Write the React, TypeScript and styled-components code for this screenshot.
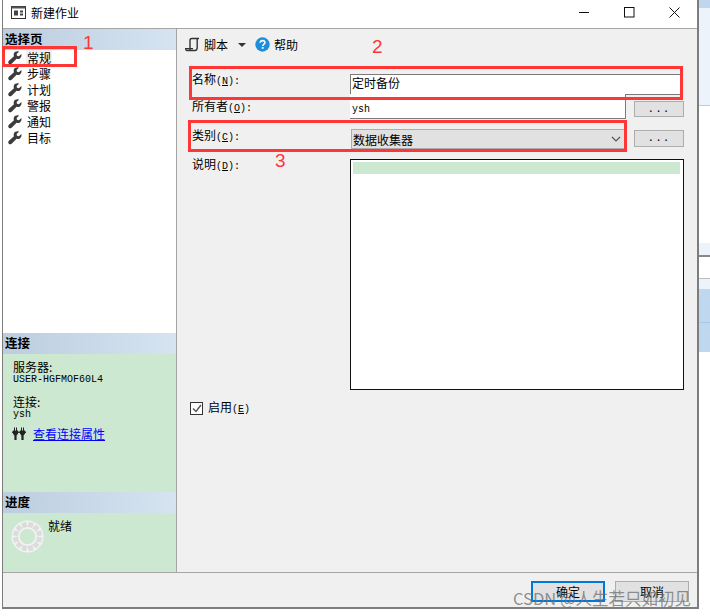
import styled, { createGlobalStyle } from "styled-components";

const Global = createGlobalStyle`
  html, body {
    margin: 0;
    padding: 0;
    background: #fff;
  }
  * {
    box-sizing: border-box;
  }
`;

const FONT = `"Noto Sans CJK SC", "Liberation Sans", sans-serif`;
const MONO = `"Liberation Mono", "Noto Sans CJK SC", monospace`;

const Page = styled.div`
  position: relative;
  width: 710px;
  height: 616px;
  overflow: hidden;
  display: flex;
  align-items: flex-start;
  padding-left: 2px;
  font-family: ${FONT};
  font-size: 12px;
  color: #000;
  background: #fff;
`;

const Dialog = styled.div`
  width: 697px;
  height: 609px;
  background: #f0f0f0;
  border-right: 2px solid #7d7d7d;
  border-bottom: 2px solid #7d7d7d;
  border-left: 1px solid #7d7d7d;
  display: flex;
  flex-direction: column;
`;

const TitleBar = styled.div`
  height: 29px;
  flex: none;
  background: #fff;
  border-bottom: 1px solid #a5a5a5;
  display: flex;
  align-items: center;
  padding: 0 17px 3px 8px;
  gap: 5px;
  font-size: 12px;
`;

const TitleText = styled.div`
  flex: 1;
`;

const WinButtons = styled.div`
  display: flex;
  align-items: center;
  gap: 34px;
`;

const Body = styled.div`
  flex: 1;
  display: flex;
  min-height: 0;
`;

const Side = styled.div`
  width: 174px;
  flex: none;
  background: #fff;
  border-right: 1px solid #a5a5a5;
  display: flex;
  flex-direction: column;
`;

const SideHead = styled.div`
  height: 21px;
  flex: none;
  background: linear-gradient(to right, #bccddf, #d6e4f1);
  font-weight: 700;
  font-size: 12.5px;
  line-height: 20px;
  padding-left: 2px;
`;

const PageList = styled.div`
  height: 283px;
  flex: none;
  padding-left: 5px;
`;

const PageRow = styled.div`
  height: 16px;
  display: flex;
  align-items: center;
  gap: 4px;
  font-size: 12px;
`;

const PageLabel = styled.span<{ $selected?: boolean }>`
  background: ${(p) => (p.$selected ? "#f0f0f0" : "transparent")};
  padding: 0 1px;
  line-height: 16px;
`;

const GreenPanel = styled.div<{ $h: number }>`
  height: ${(p) => p.$h}px;
  flex: none;
  background: #cde8d0;
`;

const ConnectPanel = styled(GreenPanel)`
  padding: 6px 0 0 10px;
  font-size: 12px;
  line-height: 13px;
`;

const Mono = styled.div`
  margin-top: 1px;
  font-family: ${MONO};
  font-size: 10px;
  line-height: 11px;
`;

const ConnectBlock = styled.div`
  margin-bottom: 10px;
`;

const ConnectLink = styled.div`
  display: flex;
  align-items: center;
  gap: 7px;
  margin-top: 6px;
  margin-left: -1px;
`;

const Link = styled.a`
  color: #0000ff;
  text-decoration: underline;
  font-size: 12px;
  line-height: 15px;
`;

const ProgressPanel = styled(GreenPanel)`
  display: flex;
  align-items: flex-start;
  gap: 4px;
  padding: 7px 0 0 8px;
  line-height: 12px;
`;

const Main = styled.div`
  flex: 1;
  min-width: 0;
  display: flex;
  flex-direction: column;
`;

const Toolbar = styled.div`
  height: 32px;
  flex: none;
  display: flex;
  align-items: center;
  padding: 0 0 1px 8px;
  gap: 4px;
`;

const ToolText = styled.span`
  font-size: 12px;
`;

const Caret = styled.span`
  width: 0;
  height: 0;
  margin: 0 5px 0 6px;
  border-left: 4px solid transparent;
  border-right: 4px solid transparent;
  border-top: 4px solid #333;
`;

const Form = styled.div`
  display: grid;
  grid-template-columns: 158px 276px 58px;
  grid-template-rows: 22px 35px 30px 231px;
  padding: 11px 0 0 15px;
  align-items: start;
`;

const FieldLabel = styled.label<{ $top: number }>`
  font-size: 12px;
  line-height: 16px;
  margin-top: ${(p) => p.$top}px;
`;

const Key = styled.span`
  font-family: ${MONO};
  font-size: 10px;
`;

const Under = styled.span`
  text-decoration: underline;
`;

const NameInput = styled.div`
  grid-column: 2 / 4;
  width: 331px;
  height: 21px;
  margin-top: 2px;
  background: #fff;
  border: 1px solid #7a7a7a;
  padding-left: 1px;
  line-height: 16px;
`;

const OwnerInput = styled.div`
  height: 25px;
  background: #fff;
  border: 1px solid #7a7a7a;
  border-top: none;
  border-left: none;
  padding: 9px 0 0 2px;
  font-family: ${MONO};
  font-size: 10px;
  line-height: 13px;
`;

const MoreButton = styled.div<{ $top: number; $h: number }>`
  width: 50px;
  height: ${(p) => p.$h}px;
  margin: ${(p) => p.$top}px 0 0 8px;
  background: #e1e1e1;
  border: 1px solid #adadad;
  text-align: center;
  font-family: ${MONO};
  font-size: 11px;
  line-height: 15px;
  letter-spacing: 1px;
`;

const Select = styled.div`
  width: 274px;
  height: 20px;
  margin-left: 1px;
  background: #e1e1e1;
  border: 1px solid #adadad;
  display: flex;
  align-items: center;
  justify-content: space-between;
  padding: 0 3px 0 1px;
`;

const Notes = styled.div`
  grid-column: 2 / 4;
  width: 334px;
  height: 231px;
  background: #fff;
  border: 1px solid #111;
  padding: 2px 3px 0 2px;
`;

const NotesLine = styled.div`
  height: 12px;
  background: #cde8d0;
`;

const CheckRow = styled.div`
  display: flex;
  align-items: center;
  gap: 5px;
  margin: 10px 0 0 13px;
  height: 16px;
  line-height: 14px;
`;

const CheckBox = styled.div`
  width: 13px;
  height: 13px;
  background: #fff;
  border: 1px solid #333;
  display: flex;
  align-items: center;
  justify-content: center;
`;

const Footer = styled.div`
  height: 35px;
  flex: none;
  border-top: 1px solid #a5a5a5;
  display: flex;
  justify-content: flex-end;
  gap: 10px;
  padding: 8px 8px 0 0;
`;

const FooterButton = styled.div<{ $primary?: boolean }>`
  width: 74px;
  height: 21px;
  background: #e1e1e1;
  border: ${(p) => (p.$primary ? "2px solid #0078d7" : "1px solid #adadad")};
  display: flex;
  align-items: center;
  justify-content: center;
`;

const RightStrip = styled.div`
  width: 11px;
  flex: none;
  align-self: stretch;
  display: flex;
  flex-direction: column;
`;

const StripPart = styled.div<{ $h: number; $bg: string }>`
  height: ${(p) => p.$h}px;
  background: ${(p) => p.$bg};
`;

const Mark = styled.div<{ $x: number; $y: number; $w: number; $h: number }>`
  position: absolute;
  left: ${(p) => p.$x}px;
  top: ${(p) => p.$y}px;
  width: ${(p) => p.$w}px;
  height: ${(p) => p.$h}px;
  border: 3px solid #ff3636;
`;

const MarkNum = styled.div<{ $x: number; $y: number }>`
  position: absolute;
  left: ${(p) => p.$x}px;
  top: ${(p) => p.$y}px;
  color: #ff3636;
  font-family: "Liberation Sans", sans-serif;
  font-size: 19px;
  line-height: 20px;
`;

const Watermark = styled.div`
  position: absolute;
  left: 513px;
  top: 588px;
  color: rgba(110, 110, 110, 0.75);
  font-size: 16.5px;
  line-height: 20px;
  white-space: nowrap;
`;

const strip: [number, string][] = [
  [8, "#bfd6ee"],
  [97, "#edf3fb"],
  [1, "#b9cde2"],
  [137, "#fff"],
  [12, "#edf3fb"],
  [2, "#888"],
  [21, "#fff"],
  [1, "#bbb"],
  [10, "#edf3fb"],
  [33, "#bfd8f0"],
  [1, "#a9c7e6"],
  [29, "#bfd8f0"],
];

function Wrench() {
  return (
    <svg width="14" height="14" viewBox="0 0 14 14">
      <path
        d="M13.4 3 10.9 5.3 9 4.8 8.6 3 11 .7C9-.1 6.8.6 6 2.3 5.5 3.3 5.6 4.3 6 5.2L.9 9.8c-.9.9-.9 2.1-.1 2.9.8.8 2 .8 2.8 0L8.6 7.8c1.1.4 2.4.3 3.3-.4 1.3-.9 1.9-2.9 1.5-4.4Z"
        fill="#3c3c3c"
      />
    </svg>
  );
}

function ScriptIcon() {
  return (
    <svg width="15" height="15" viewBox="0 0 15 15" fill="none" stroke="#333" strokeWidth="1.4">
      <path d="M5 13V3.2C5 2 5.8 1.5 7 1.5h7" />
      <path d="M12.2 1.5V10.5C12.2 12 11.6 13.5 10 13.5H2C1 13.5.7 12.8.7 11.6H8" />
    </svg>
  );
}

function HelpIcon() {
  return (
    <svg width="15" height="15" viewBox="0 0 15 15">
      <circle cx="7.5" cy="7.5" r="7.2" fill="#1c8fdc" />
      <path
        d="M5.2 5.8C5.3 4.4 6.3 3.6 7.6 3.6c1.4 0 2.3.8 2.3 2 0 1.8-2.2 1.8-2.2 3.5"
        fill="none"
        stroke="#fff"
        strokeWidth="1.6"
      />
      <rect x="6.8" y="10" width="1.8" height="1.8" fill="#fff" />
    </svg>
  );
}

function PlugIcon() {
  return (
    <svg width="14" height="14" viewBox="0 0 14 14" fill="#222">
      <path d="M1 3.5h1V.5h1v3h1v-3h1v3h1v3.2L4.6 8.4V13H2.4V8.4L1 6.7Z" />
      <path d="M8 3.5h1V.5h1v3h1v-3h1v3h1v3.2l-1.4 1.7V13H9.4V8.4L8 6.7Z" />
      <rect x="0" y="4.5" width="1" height="1.4" />
      <rect x="6" y="4.5" width="2" height="1.4" />
      <rect x="13" y="4.5" width="1" height="1.4" />
    </svg>
  );
}

function Spinner() {
  const ticks = Array.from({ length: 12 }, (_, i) => i * 30 + 15);
  return (
    <svg width="33" height="33" viewBox="0 0 34 34">
      <circle cx="17" cy="17" r="16.5" fill="#f3f3f3" />
      {ticks.map((a) => (
        <rect key={a} x="14.4" y="2" width="5.2" height="6.4" fill="#dcdcdc" transform={`rotate(${a} 17 17)`} />
      ))}
      <circle cx="17" cy="17" r="9.8" fill="#f3f3f3" />
      <circle cx="17" cy="17" r="8" fill="#cde8d0" />
    </svg>
  );
}

export default function App() {
  const pages = ["常规", "步骤", "计划", "警报", "通知", "目标"];
  return (
    <Page>
      <Global />
      <Dialog>
        <TitleBar>
          <svg width="15" height="13" viewBox="0 0 15 13">
            <rect x="0.5" y="0.5" width="14" height="12" fill="#fff" stroke="#333" />
            <rect x="0.5" y="0.5" width="14" height="2" fill="#555" />
            <rect x="3" y="4.5" width="4" height="5" fill="#444" />
            <rect x="9" y="4.5" width="3" height="2" fill="#444" />
            <rect x="9" y="7.5" width="3" height="2" fill="#444" />
          </svg>
          <TitleText>新建作业</TitleText>
          <WinButtons>
            <svg width="11" height="11" viewBox="0 0 11 11">
              <rect x="0" y="5" width="10" height="1" fill="#111" />
            </svg>
            <svg width="11" height="11" viewBox="0 0 11 11">
              <rect x="0.5" y="0.5" width="9.5" height="9.5" fill="none" stroke="#111" />
            </svg>
            <svg width="11" height="11" viewBox="0 0 11 11">
              <path d="M.5.5l10 10M10.5.5l-10 10" stroke="#111" fill="none" />
            </svg>
          </WinButtons>
        </TitleBar>
        <Body>
          <Side>
            <SideHead>选择页</SideHead>
            <PageList>
              {pages.map((p, i) => (
                <PageRow key={p}>
                  <Wrench />
                  <PageLabel $selected={i === 0}>{p}</PageLabel>
                </PageRow>
              ))}
            </PageList>
            <SideHead>连接</SideHead>
            <ConnectPanel $h={138}>
              <ConnectBlock>
                <div>服务器:</div>
                <Mono>USER-HGFMOF60L4</Mono>
              </ConnectBlock>
              <div>连接:</div>
              <Mono>ysh</Mono>
              <ConnectLink>
                <PlugIcon />
                <Link>查看连接属性</Link>
              </ConnectLink>
            </ConnectPanel>
            <SideHead>进度</SideHead>
            <ProgressPanel $h={59}>
              <Spinner />
              <span>就绪</span>
            </ProgressPanel>
          </Side>
          <Main>
            <Toolbar>
              <ScriptIcon />
              <ToolText>脚本</ToolText>
              <Caret />
              <HelpIcon />
              <ToolText>帮助</ToolText>
            </Toolbar>
            <Form>
              <FieldLabel $top={-1}>
                名称<Key>(<Under>N</Under>):</Key>
              </FieldLabel>
              <NameInput>定时备份</NameInput>
              <FieldLabel $top={4}>
                所有者<Key>(<Under>O</Under>):</Key>
              </FieldLabel>
              <OwnerInput>ysh</OwnerInput>
              <MoreButton $top={7} $h={16}>...</MoreButton>
              <FieldLabel $top={-2}>
                类别<Key>(<Under>C</Under>):</Key>
              </FieldLabel>
              <Select>
                <span>数据收集器</span>
                <svg width="10" height="6" viewBox="0 0 10 6">
                  <path d="M1 1l4 4 4-4" fill="none" stroke="#555" strokeWidth="1.2" />
                </svg>
              </Select>
              <MoreButton $top={1} $h={17}>...</MoreButton>
              <FieldLabel $top={-3}>
                说明<Key>(<Under>D</Under>):</Key>
              </FieldLabel>
              <Notes>
                <NotesLine />
              </Notes>
            </Form>
            <CheckRow>
              <CheckBox>
                <svg width="10" height="9" viewBox="0 0 10 9">
                  <path d="M1 4.5l3 3 5-6.5" fill="none" stroke="#555" strokeWidth="1.4" />
                </svg>
              </CheckBox>
              <span>
                启用<Key>(<Under>E</Under>)</Key>
              </span>
            </CheckRow>
          </Main>
        </Body>
        <Footer>
          <FooterButton $primary>确定</FooterButton>
          <FooterButton>取消</FooterButton>
        </Footer>
      </Dialog>
      <RightStrip>
        {strip.map(([h, bg], i) => (
          <StripPart key={i} $h={h} $bg={bg} />
        ))}
      </RightStrip>
      <Mark $x={2} $y={46} $w={75} $h={21} />
      <Mark $x={189} $y={66} $w={494} $h={34} />
      <Mark $x={188} $y={120} $w={439} $h={32} />
      <MarkNum $x={83} $y={33}>1</MarkNum>
      <MarkNum $x={372} $y={37}>2</MarkNum>
      <MarkNum $x={275} $y={151}>3</MarkNum>
      <Watermark>CSDN @人生若只如初见</Watermark>
    </Page>
  );
}
